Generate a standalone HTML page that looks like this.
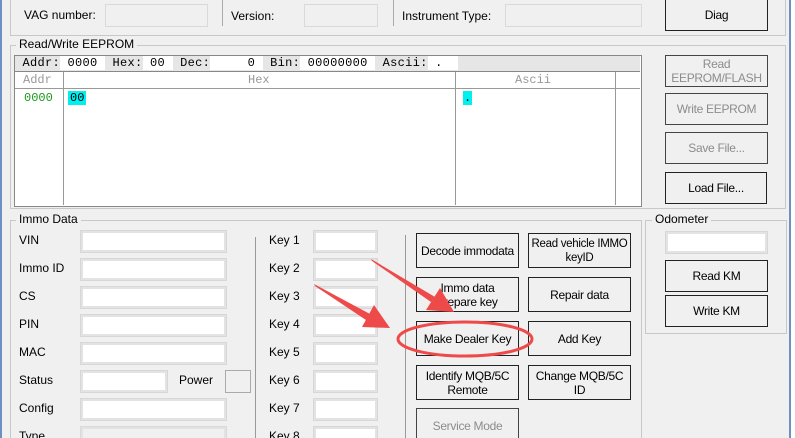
<!DOCTYPE html>
<html style="overflow:hidden;width:795px;height:438px"><head><meta charset="utf-8"><style>
body{margin:0;width:795px;height:438px;background:#f0f0f0;position:relative;overflow:hidden;font-family:"Liberation Sans",sans-serif;font-size:12px;color:#000}
.a{position:absolute}
.in{position:absolute;background:#fff;border:1px solid #d7d7d7;box-shadow:inset 0 0 0 2px #e3e3e3}
.dis{position:absolute;background:#f0f0f0;border:1px solid #d9d9d9}
.btn{position:absolute;border:1px solid #222;background:#f0f0f0;display:flex;align-items:center;justify-content:center;text-align:center;line-height:14px;box-sizing:border-box;letter-spacing:-0.3px;white-space:nowrap}
.g{color:#8c8c8c;border-color:#444}
.grp{position:absolute;border:1px solid #c8c8c8}
.gt{position:absolute;background:#f0f0f0;padding:0 3px}
.mono{font-family:"Liberation Mono",monospace;font-size:12px}
</style></head><body>
<div class="a" style="left:0;top:0;width:2px;height:438px;background:#6d8fc4"></div>
<div class="a" style="left:789px;top:0;width:2px;height:438px;background:#6d8fc4"></div>
<div class="a" style="left:791px;top:0;width:4px;height:438px;background:#fff"></div>
<!-- top group -->
<div class="grp" style="left:10px;top:-2px;width:774px;height:36px"></div>
<div class="a" style="left:24px;top:8px">VAG number:</div>
<div class="dis" style="left:105px;top:4px;width:101px;height:21px"></div>
<div class="a" style="left:222px;top:0;width:1px;height:26px;background:#aaa"></div>
<div class="a" style="left:231px;top:9px">Version:</div>
<div class="dis" style="left:304px;top:4px;width:72px;height:21px"></div>
<div class="a" style="left:393px;top:0;width:1px;height:26px;background:#aaa"></div>
<div class="a" style="left:402px;top:9px">Instrument Type:</div>
<div class="dis" style="left:505px;top:4px;width:135px;height:21px"></div>
<div class="btn" style="left:665px;top:-2px;width:103px;height:33px">Diag</div>
<!-- EEPROM -->
<div class="grp" style="left:10px;top:45px;width:774px;height:162px"></div>
<div class="gt" style="left:16px;top:37px">Read/Write EEPROM</div>
<div class="a" style="left:14px;top:55px;width:626px;height:150px;background:#fff;border:1px solid #888"></div>
<div class="a mono" style="left:15px;top:56px;width:625px;height:15px;background:#e6e6e6;border-bottom:1px solid #888;white-space:pre;line-height:15px;letter-spacing:0.3px"> Addr:<span style="background:#fff"> 0000 </span> Hex:<span style="background:#fff"> 00 </span> Dec:<span style="background:#fff">     0 </span> Bin:<span style="background:#fff"> 00000000 </span> Ascii:<span style="background:#fff"> .  </span></div>
<div class="a" style="left:15px;top:88px;width:625px;height:1px;background:#999"></div>
<div class="a" style="left:63px;top:72px;width:1px;height:133px;background:#999"></div>
<div class="a" style="left:455px;top:72px;width:1px;height:133px;background:#999"></div>
<div class="a" style="left:615px;top:72px;width:1px;height:133px;background:#999"></div>
<div class="a mono" style="left:23px;top:73px;color:#999">Addr</div>
<div class="a mono" style="left:248px;top:73px;color:#999">Hex</div>
<div class="a mono" style="left:515px;top:73px;color:#999">Ascii</div>
<div class="a mono" style="left:24px;top:91px;color:#1a9a1a">0000</div>
<div class="a mono" style="left:68px;top:91px;background:#00f0f0;padding:0 2px">00</div>
<div class="a mono" style="left:463px;top:91px;background:#00f0f0;padding:0 1px">.</div>
<div class="btn g" style="left:665px;top:55px;width:103px;height:32px">Read<br>EEPROM/FLASH</div>
<div class="btn g" style="left:665px;top:93px;width:103px;height:32px">Write EEPROM</div>
<div class="btn g" style="left:665px;top:132px;width:103px;height:32px">Save File...</div>
<div class="btn" style="left:665px;top:172px;width:102px;height:32px">Load File...</div>
<!-- Immo -->
<div class="grp" style="left:10px;top:220px;width:630px;height:230px"></div>
<div class="gt" style="left:16px;top:212px">Immo Data</div>
<div class="a" style="left:19px;top:226px;line-height:28px">VIN<br>Immo ID<br>CS<br>PIN<br>MAC<br>Status<br>Config<br>Type</div>
<div class="in" style="left:80px;top:230px;width:145px;height:21px"></div>
<div class="in" style="left:80px;top:258px;width:145px;height:21px"></div>
<div class="in" style="left:80px;top:286px;width:145px;height:21px"></div>
<div class="in" style="left:80px;top:314px;width:145px;height:21px"></div>
<div class="in" style="left:80px;top:342px;width:145px;height:21px"></div>
<div class="in" style="left:80px;top:370px;width:86px;height:21px"></div>
<div class="a" style="left:179px;top:373px">Power</div>
<div class="a" style="left:225px;top:370px;width:24px;height:21px;border:1px solid #aaa"></div>
<div class="in" style="left:80px;top:398px;width:145px;height:21px"></div>
<div class="dis" style="left:80px;top:426px;width:145px;height:21px;box-shadow:inset 0 0 0 2px #e3e3e3"></div>
<div class="a" style="left:255px;top:237px;width:1px;height:210px;background:#999"></div>
<div class="a" style="left:269px;top:226px;line-height:28px">Key 1<br>Key 2<br>Key 3<br>Key 4<br>Key 5<br>Key 6<br>Key 7<br>Key 8</div>
<div class="in" style="left:313px;top:230px;width:63px;height:21px"></div>
<div class="in" style="left:313px;top:258px;width:63px;height:21px"></div>
<div class="in" style="left:313px;top:286px;width:63px;height:21px"></div>
<div class="in" style="left:313px;top:314px;width:63px;height:21px"></div>
<div class="in" style="left:313px;top:342px;width:63px;height:21px"></div>
<div class="in" style="left:313px;top:370px;width:63px;height:21px"></div>
<div class="in" style="left:313px;top:398px;width:63px;height:21px"></div>
<div class="in" style="left:313px;top:426px;width:63px;height:21px"></div>
<div class="a" style="left:405px;top:235px;width:1px;height:210px;background:#999"></div>
<div class="btn" style="left:416px;top:233px;width:103px;height:35px">Decode immodata</div>
<div class="btn" style="left:528px;top:233px;width:103px;height:35px;font-size:11.5px">Read vehicle IMMO<br>keyID</div>
<div class="btn" style="left:416px;top:277px;width:103px;height:35px">Immo data<br>prepare key</div>
<div class="btn" style="left:528px;top:277px;width:103px;height:35px">Repair data</div>
<div class="btn" style="left:416px;top:321px;width:103px;height:35px">Make Dealer Key</div>
<div class="btn" style="left:528px;top:321px;width:103px;height:35px">Add Key</div>
<div class="btn" style="left:416px;top:365px;width:103px;height:35px">Identify MQB/5C<br>Remote</div>
<div class="btn" style="left:528px;top:365px;width:103px;height:35px">Change MQB/5C<br>ID</div>
<div class="btn g" style="left:416px;top:408px;width:103px;height:35px">Service Mode</div>
<!-- Odometer -->
<div class="grp" style="left:645px;top:220px;width:140px;height:112px"></div>
<div class="gt" style="left:652px;top:212px">Odometer</div>
<div class="in" style="left:665px;top:231px;width:101px;height:21px"></div>
<div class="btn" style="left:665px;top:260px;width:103px;height:32px">Read KM</div>
<div class="btn" style="left:665px;top:295px;width:103px;height:32px">Write KM</div>
<!-- annotations -->
<svg class="a" style="left:0;top:0" width="795" height="438">
<g fill="#ee4a4a">
<polygon points="371,259 372,261 431,302 435,297"/>
<polygon points="454,312 426,310 440,288"/>
<polygon points="314,284 315,286 366,320 370,314"/>
<polygon points="390,328 362,327 374,305"/>
</g>
<ellipse cx="465" cy="339" rx="67" ry="17" fill="none" stroke="#ee4a4a" stroke-width="3"/>
</svg>
</body></html>
